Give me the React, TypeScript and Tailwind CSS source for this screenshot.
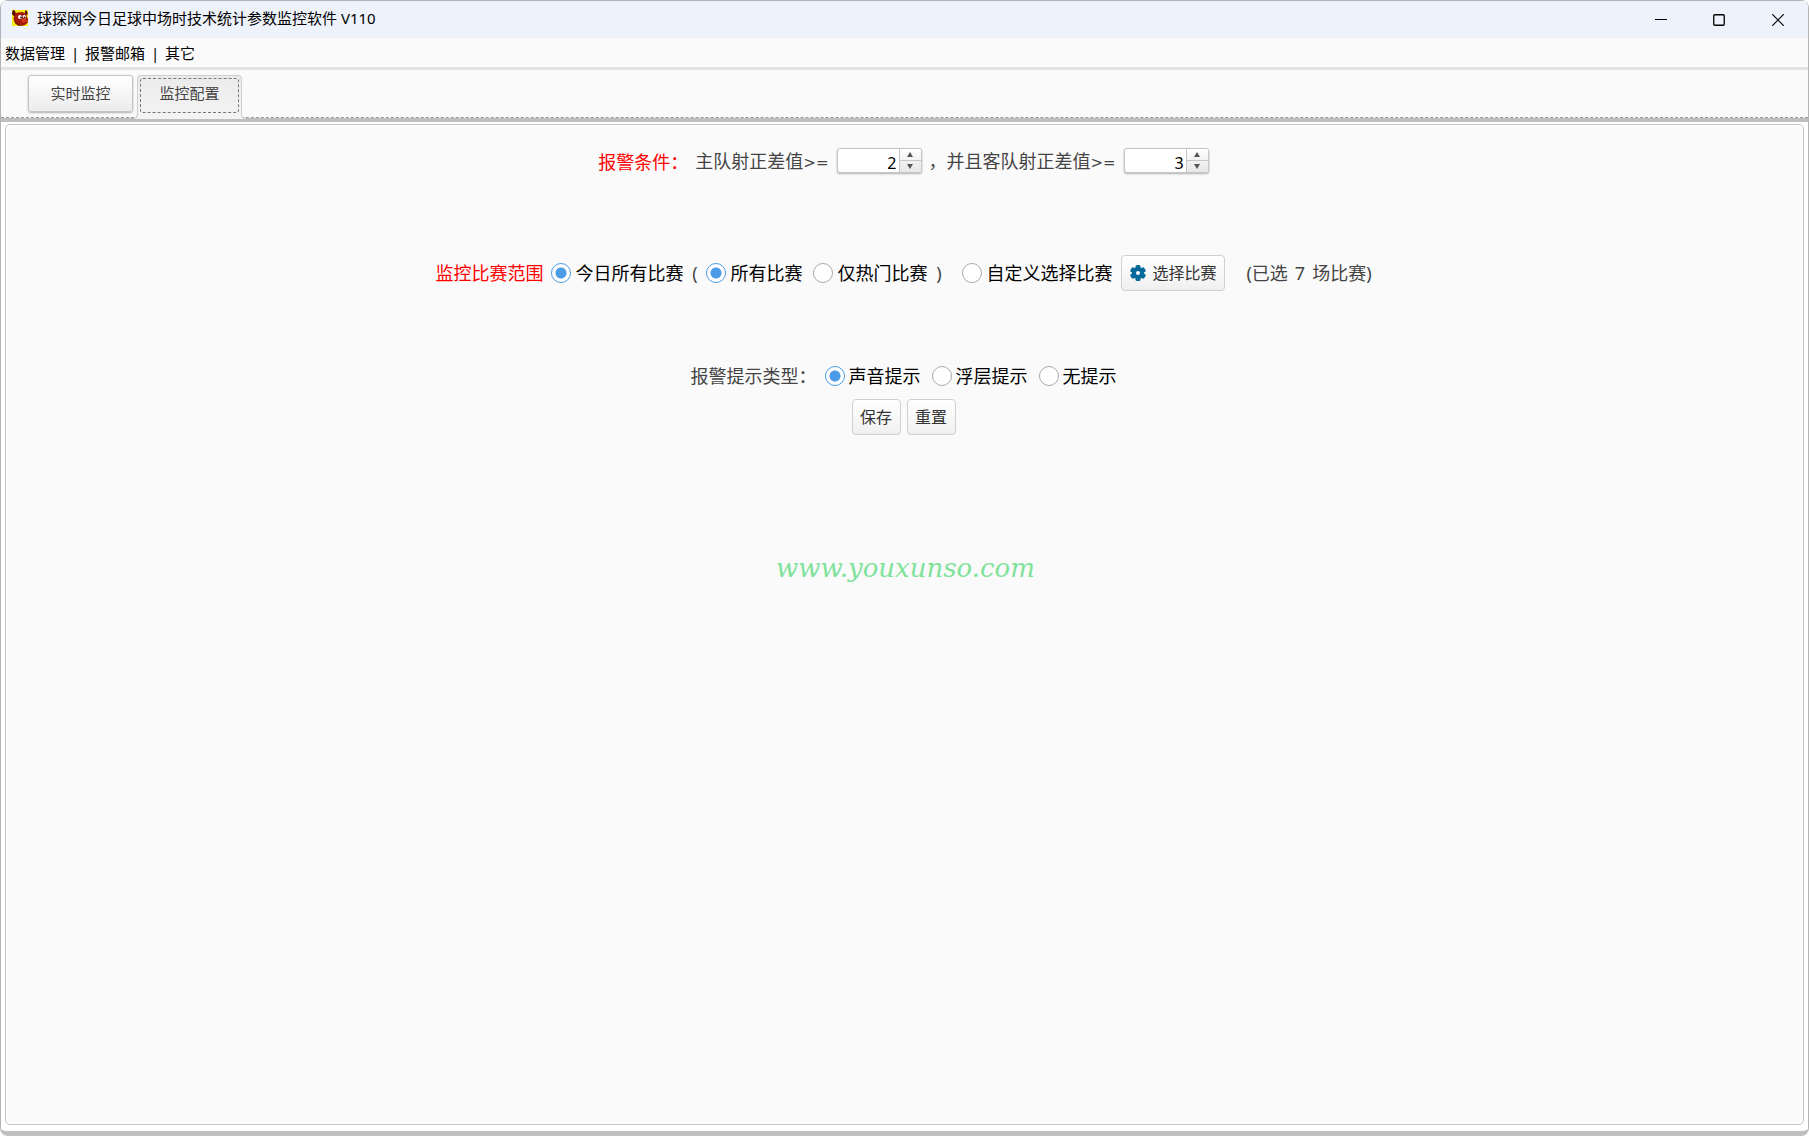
import { useState } from "react";
import type { ReactNode } from "react";

const menuItems = ["数据管理", "报警邮箱", "其它"];

function AppIcon() {
  return (
    <svg viewBox="0 0 16 16" className="h-4 w-4 shrink-0" aria-hidden="true">
      <rect width="16" height="16" fill="#f7ea10" />
      <path
        d="M1 0 L3 1 L3.5 3 L6 2.5 L10 2 L13 3 L13 0.5 L15 1 L15.5 4 L14.5 6 L16 9 L15.5 13 L12 15.5 L6 15.5 L3 13 L1.5 9 L2 6 L0 4 Z"
        fill="#a31a0c"
      />
      <path d="M1 0 L3 1 L3.5 4 L2 6 L0 4 Z M13 0.5 L15 1 L15.5 4 L13.5 4 Z" fill="#4a0f08" />
      <path d="M2 7 Q3 13 7 14.5 L12 15.5 H6 L3 13 Z" fill="#6b1008" />
      <path d="M9 9 Q13 7.5 15 10 Q14 13 10 12.5 Z" fill="#cf3a1c" />
      <ellipse cx="8" cy="7" rx="2" ry="1.9" fill="#fff" />
      <ellipse cx="12.3" cy="6.6" rx="1.5" ry="1.8" fill="#fff" />
      <circle cx="9" cy="7.4" r="0.9" fill="#111" />
      <circle cx="12.4" cy="7.2" r="0.8" fill="#111" />
    </svg>
  );
}

function TitleBar() {
  return (
    <header className="flex h-[38px] items-center justify-between border-t border-[#b4b4b4] bg-[#eef2fa]">
      <div className="flex items-center gap-[9px] pb-[3px] pl-[11px]">
        <AppIcon />
        <h1 className="text-[15px] leading-5 text-black">球探网今日足球中场时技术统计参数监控软件 V110</h1>
      </div>
      <div className="flex h-full">
        <button type="button" aria-label="最小化" className="flex w-[58px] items-center justify-center">
          <svg viewBox="0 0 12 12" className="h-3 w-3">
            <path d="M0 5.5 H12" stroke="#000" />
          </svg>
        </button>
        <button type="button" aria-label="最大化" className="flex w-[58px] items-center justify-center">
          <svg viewBox="0 0 12 12" className="h-3 w-3">
            <rect x="0.75" y="0.75" width="10.5" height="10.5" rx="1" fill="none" stroke="#000" strokeWidth="1.3" />
          </svg>
        </button>
        <button type="button" aria-label="关闭" className="flex w-[60px] items-center justify-center">
          <svg viewBox="0 0 12 12" className="h-3 w-3">
            <path d="M0.3 0.3 L11.7 11.7 M11.7 0.3 L0.3 11.7" stroke="#000" strokeWidth="1.2" />
          </svg>
        </button>
      </div>
    </header>
  );
}

function MenuBar() {
  return (
    <nav className="flex h-8 items-center border-b-3 border-[#e0e4e7] pl-1 text-[15px] leading-5 text-black">
      {menuItems.map((item, i) => (
        <div key={item} className="flex items-center">
          {i > 0 && <span className="w-5 text-center">|</span>}
          <button type="button">{item}</button>
        </div>
      ))}
    </nav>
  );
}

function TabBar() {
  return (
    <div className="border-b-4 border-[#bfbfbf]">
      <div role="tablist" className="flex h-12 gap-1 border-b border-dashed border-[#999] pt-[5px] pl-[27px] text-[15px] text-[#444]">
        <button
          type="button"
          role="tab"
          aria-selected="false"
          className="h-[37px] w-[105px] rounded-[3px] border border-[#c4c4c4] bg-linear-to-b from-white to-[#ececec] shadow-[0_1px_2px_rgba(0,0,0,0.3)]"
        >
          实时监控
        </button>
        <button
          type="button"
          role="tab"
          aria-selected="true"
          className="relative h-11 w-[105px] rounded-t-[4px] border border-b-0 border-[#cfcfcf] bg-linear-to-b from-[#ebebeb] to-[#f4f4f4] p-[2px] pb-[6px]"
        >
          <span className="flex h-full items-center justify-center rounded-[3px] border border-dashed border-[#777] pb-1">
            监控配置
          </span>
          <svg viewBox="0 0 4 5" className="absolute bottom-0 -left-1 h-[5px] w-1">
            <path d="M4 0 Q4 4 0 5 H4 Z" fill="#f4f4f4" />
            <path d="M3.5 0 Q3.5 4 0 4.5" fill="none" stroke="#cfcfcf" />
          </svg>
          <svg viewBox="0 0 4 5" className="absolute -right-1 bottom-0 h-[5px] w-1">
            <path d="M0 0 Q0 4 4 5 H0 Z" fill="#f4f4f4" />
            <path d="M0.5 0 Q0.5 4 4 4.5" fill="none" stroke="#cfcfcf" />
          </svg>
        </button>
      </div>
    </div>
  );
}

interface SpinnerProps {
  id: string;
  value: number;
  onChange: (value: number) => void;
}

function Spinner({ id, value, onChange }: SpinnerProps) {
  return (
    <span className="flex h-[25px] w-[85px] overflow-hidden rounded-[3px] border border-[#c6c6c6] bg-white shadow-[0_1px_2px_rgba(0,0,0,0.3)]">
      <input
        id={id}
        type="text"
        inputMode="numeric"
        value={value}
        onChange={(e) => onChange(Number(e.target.value) || 0)}
        className="w-0 flex-1 pt-1 pr-[2px] text-right text-base leading-5 text-black outline-none"
      />
      <span className="flex w-[22px] flex-col border-l border-[#c6c6c6] bg-linear-to-b from-white to-[#e6e6e6]">
        <button
          type="button"
          aria-label="增加"
          onClick={() => onChange(value + 1)}
          className="flex flex-1 items-center justify-center border-b border-[#c6c6c6]"
        >
          <svg viewBox="0 0 6 5" className="h-[5px] w-[6px]">
            <path d="M3 0 L6 5 H0 Z" fill="#555" />
          </svg>
        </button>
        <button
          type="button"
          aria-label="减少"
          onClick={() => onChange(value - 1)}
          className="flex flex-1 items-center justify-center"
        >
          <svg viewBox="0 0 6 5" className="h-[5px] w-[6px]">
            <path d="M0 0 H6 L3 5 Z" fill="#555" />
          </svg>
        </button>
      </span>
    </span>
  );
}

interface RadioProps {
  name: string;
  label: string;
  checked: boolean;
  onChange: () => void;
}

function Radio({ name, label, checked, onChange }: RadioProps) {
  return (
    <label className="flex items-center gap-1 text-black">
      <input
        type="radio"
        name={name}
        checked={checked}
        onChange={onChange}
        className="h-5 w-5 appearance-none rounded-full border border-[#aaa] bg-white checked:border-[#4d9be6] checked:bg-[radial-gradient(circle,#4d9be6_5px,white_6px)]"
      />
      {label}
    </label>
  );
}

function PushButton({ children, className = "w-[49px]" }: { children: ReactNode; className?: string }) {
  return (
    <button
      type="button"
      className={`flex h-9 items-center justify-center gap-[6px] rounded-[4px] border border-[#d0d0d0] bg-linear-to-b from-white to-[#f0f0f0] text-base text-[#333] ${className}`}
    >
      {children}
    </button>
  );
}

function GearIcon() {
  return (
    <svg viewBox="0 0 16 16" className="h-4 w-4" aria-hidden="true">
      <g fill="#05699b">
        <circle cx="8" cy="8" r="6" />
        <rect x="5.5" y="0" width="5" height="16" rx="1.5" />
        <rect x="5.5" y="0" width="5" height="16" rx="1.5" transform="rotate(60 8 8)" />
        <rect x="5.5" y="0" width="5" height="16" rx="1.5" transform="rotate(120 8 8)" />
      </g>
      <circle cx="8" cy="8" r="2" fill="#fafafa" />
    </svg>
  );
}

function AtLeast() {
  return <span className="font-['DejaVu_Sans',sans-serif] text-[15px]">&gt;=</span>;
}

export default function App() {
  const [homeDiff, setHomeDiff] = useState(2);
  const [awayDiff, setAwayDiff] = useState(3);
  const [scope, setScope] = useState("today");
  const [filter, setFilter] = useState("all");
  const [alertType, setAlertType] = useState("sound");

  return (
    <div className="flex min-h-screen flex-col overflow-hidden rounded-[8px] border-x border-b-5 border-x-[#b4b4b4] border-b-[#bfbfbf] bg-[#fafafa] font-['Noto_Sans','Noto_Sans_CJK_SC',sans-serif]">
      <TitleBar />
      <MenuBar />
      <TabBar />
      <div className="flex flex-1 flex-col bg-white px-1 pt-[2px] pb-[6px]">
        <main className="flex flex-1 flex-col items-center rounded-[5px] border border-[#c4c4c4] bg-[#fafafa] pt-[23px] pr-[2px] text-lg leading-7 text-[#444] shadow-[inset_0_0_3px_2px_white]">
          <div className="flex h-7 items-center">
            <span className="text-[#f00]">报警条件：</span>
            <label htmlFor="home-diff" className="ml-[7px]">
              主队射正差值
              <AtLeast />
            </label>
            <span className="ml-2 pb-[3px]">
              <Spinner id="home-diff" value={homeDiff} onChange={setHomeDiff} />
            </span>
            <label htmlFor="away-diff" className="ml-[7px]">
              ，并且客队射正差值
              <AtLeast />
            </label>
            <span className="ml-2 pb-[3px]">
              <Spinner id="away-diff" value={awayDiff} onChange={setAwayDiff} />
            </span>
          </div>

          <div className="mt-[79px] flex h-9 items-center">
            <span className="mr-2 text-[#f00]">监控比赛范围</span>
            <Radio name="scope" label="今日所有比赛" checked={scope === "today"} onChange={() => setScope("today")} />
            <span className="w-[23px] text-center">(</span>
            <Radio name="filter" label="所有比赛" checked={filter === "all"} onChange={() => setFilter("all")} />
            <span className="w-[11px]" />
            <Radio name="filter" label="仅热门比赛" checked={filter === "hot"} onChange={() => setFilter("hot")} />
            <span className="mr-[12px] w-[23px] text-center">)</span>
            <Radio name="scope" label="自定义选择比赛" checked={scope === "custom"} onChange={() => setScope("custom")} />
            <span className="ml-[9px]">
              <PushButton className="w-[104px]">
                <GearIcon />
                选择比赛
              </PushButton>
            </span>
            <span className="ml-[21px]">
              (已选<span className="px-[7px]">7</span>场比赛)
            </span>
          </div>

          <div className="mt-[71px] flex h-7 items-center gap-[11px]">
            <span className="-mr-[3px]">报警提示类型：</span>
            <Radio name="alert" label="声音提示" checked={alertType === "sound"} onChange={() => setAlertType("sound")} />
            <Radio name="alert" label="浮层提示" checked={alertType === "layer"} onChange={() => setAlertType("layer")} />
            <Radio name="alert" label="无提示" checked={alertType === "none"} onChange={() => setAlertType("none")} />
          </div>

          <div className="mt-[9px] flex gap-[6px]">
            <PushButton>保存</PushButton>
            <PushButton>重置</PushButton>
          </div>

          <p className="mt-[113px] pl-1 font-['DejaVu_Serif',serif] text-[26px] leading-10 text-[#80e29a] italic">
            www.youxunso.com
          </p>
        </main>
      </div>
    </div>
  );
}
